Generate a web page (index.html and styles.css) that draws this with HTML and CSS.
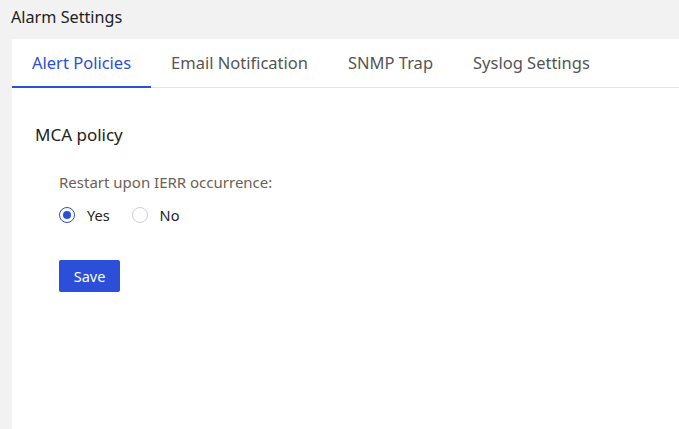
FILE: index.html
```html
<!DOCTYPE html>
<html>
<head>
<meta charset="utf-8">
<link rel="stylesheet" href="styles.css">
</head>
<body>
<div class="page">
  <div class="title">Alarm Settings</div>
  <div class="panel">
    <div class="tabs">
      <div class="tab active">Alert Policies</div>
      <div class="tab">Email Notification</div>
      <div class="tab">SNMP Trap</div>
      <div class="tab">Syslog Settings</div>
    </div>
    <div class="content">
      <div class="section-title">MCA policy</div>
      <div class="field">
        <div class="label">Restart upon IERR occurrence:</div>
        <div class="radios">
          <label class="radio"><span class="dot checked"></span><span class="rtext">Yes</span></label>
          <label class="radio"><span class="dot"></span><span class="rtext">No</span></label>
        </div>
        <button class="save">Save</button>
      </div>
    </div>
  </div>
</div>
</body>
</html>
```
FILE: styles.css
```css
html, body {
  margin: 0;
  padding: 0;
  height: 100%;
}
body {
  background: #f2f2f2;
  font-family: "Noto Sans", "Open Sans", sans-serif;
  color: #222;
  overflow: hidden;
}
.page {
  display: flex;
  flex-direction: column;
  height: 100%;
}
.title {
  height: 39px;
  box-sizing: border-box;
  padding: 5px 0 0 11px;
  font-size: 16.2px;
  line-height: 24px;
  color: #222;
}
.panel {
  flex: 1;
  margin-left: 12px;
  background: #fff;
}
.tabs {
  display: flex;
  height: 49px;
  border-bottom: 1px solid #e4e4e4;
  box-sizing: border-box;
}
.tab {
  padding: 1px 20px 0;
  font-size: 16.5px;
  line-height: 45px;
  color: #555;
  border-bottom: 2px solid transparent;
  margin-bottom: -1px;
}
.tab.active {
  color: #2b4fd8;
  border-bottom-color: #2b4fd8;
}
.content {
  padding: 35px 0 0 23px;
}
.section-title {
  font-size: 17px;
  line-height: 24px;
  color: #222;
}
.field {
  padding: 25px 0 0 24px;
}
.label {
  font-size: 15px;
  line-height: 20px;
  color: #6b6158;
}
.radios {
  display: flex;
  gap: 22px;
  margin-top: 12px;
  height: 22px;
  align-items: center;
}
.radio {
  display: flex;
  align-items: center;
}
.dot {
  width: 16px;
  height: 16px;
  box-sizing: border-box;
  border: 1px solid #cfcfcf;
  border-radius: 50%;
  position: relative;
  background: #fff;
}
.dot.checked {
  border-color: #2b4fd8;
}
.dot.checked::after {
  content: "";
  position: absolute;
  left: 3px;
  top: 3px;
  width: 8px;
  height: 8px;
  border-radius: 50%;
  background: #2b4fd8;
}
.rtext {
  margin-left: 12px;
  font-size: 14.5px;
  color: #222;
}
.save {
  display: block;
  margin-top: 34px;
  width: 61px;
  height: 32px;
  border: none;
  border-radius: 2px;
  background: #2b4fd8;
  color: #fff;
  font-family: inherit;
  font-size: 14.5px;
  padding: 0;
}
```
